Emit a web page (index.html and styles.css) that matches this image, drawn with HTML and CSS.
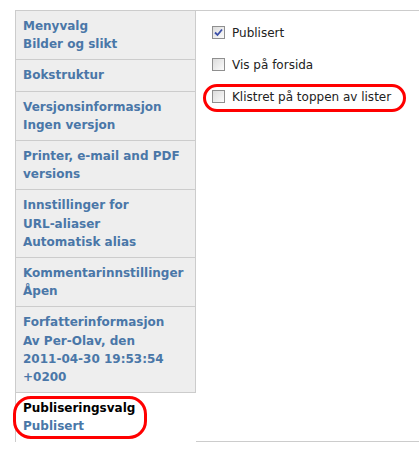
FILE: index.html
```html
<!DOCTYPE html>
<html lang="no">
<head>
  <meta charset="UTF-8" />
  <title>Publiseringsvalg</title>
  <link rel="stylesheet" href="styles.css">
</head>
<body>
  <div class="tabs">
    <ul class="tab-list">
      <li class="tab"><a href="#"><strong>Menyvalg</strong><span>Bilder og slikt</span></a></li>
      <li class="tab"><a href="#"><strong>Bokstruktur</strong></a></li>
      <li class="tab"><a href="#"><strong>Versjonsinformasjon</strong><span>Ingen versjon</span></a></li>
      <li class="tab"><a href="#"><strong>Printer, e-mail and PDF versions</strong></a></li>
      <li class="tab"><a href="#"><strong>Innstillinger for URL&#8209;aliaser</strong><span>Automatisk alias</span></a></li>
      <li class="tab"><a href="#"><strong>Kommentarinnstillinger</strong><span>Åpen</span></a></li>
      <li class="tab"><a href="#"><strong>Forfatterinformasjon</strong><span>Av Per-Olav, den 2011&#8209;04&#8209;30 19:53:54 +0200</span></a></li>
      <li class="tab selected">
        <a href="#"><strong>Publiseringsvalg</strong><span>Publisert</span></a>
        <div class="mark mark-tab"></div>
      </li>
    </ul>

    <div class="pane">
      <label class="check">
        <span class="box checked">
          <svg width="9" height="9" viewBox="0 0 9 9"><path d="M1 4.5 L3.5 7 L8 1.5" fill="none" stroke="#3b4fa8" stroke-width="1.8"/></svg>
        </span>
        Publisert
      </label>
      <label class="check">
        <span class="box"></span>
        Vis på forsida
      </label>
      <label class="check">
        <span class="box"></span>
        Klistret på toppen av lister
        <div class="mark mark-row"></div>
      </label>
    </div>
  </div>
</body>
</html>
```

FILE: styles.css
```css
* {
  margin: 0;
  padding: 0;
  box-sizing: border-box;
}

body {
  background: #fff;
  font-family: 'DejaVu Sans', Verdana, sans-serif;
  font-size: 12px;
  padding: 10px 0 0 15px;
}

.tabs {
  display: flex;
  width: 404px;
  height: 432px;
  border: 1px solid #ccc;
  border-right: none;
}

.tab-list {
  list-style: none;
  width: 180px;
}

.tab {
  position: relative;
  background: #eee;
  border-right: 1px solid #ccc;
  border-bottom: 1px solid #ccc;
}

.tab a {
  display: block;
  padding: 6px 12px 6px 7px;
  line-height: 18.2px;
  color: #4a77a8;
  text-decoration: none;
  font-weight: bold;
}

.tab strong,
.tab span {
  display: block;
}

.tab.selected {
  background: #fff;
  border: none;
}

.tab.selected strong {
  color: #000;
}

.pane {
  flex: 1;
  padding: 15px 0 0 16px;
}

.check {
  position: relative;
  display: flex;
  align-items: center;
  height: 13px;
  margin-bottom: 19px;
  color: #222;
  gap: 7px;
}

.box {
  width: 13px;
  height: 13px;
  border: 1px solid #8f8f8f;
  background: linear-gradient(135deg, #dcdcdc, #fbfbfb);
  display: flex;
  align-items: center;
  justify-content: center;
}

.mark {
  position: absolute;
  border: 3px solid #f00;
  border-radius: 14px;
  pointer-events: none;
}

.mark-row {
  left: -9px;
  top: -6px;
  width: 203px;
  height: 28px;
}

.mark-tab {
  left: -3px;
  top: 3px;
  width: 134px;
  height: 43px;
  border-radius: 18px;
}
```
